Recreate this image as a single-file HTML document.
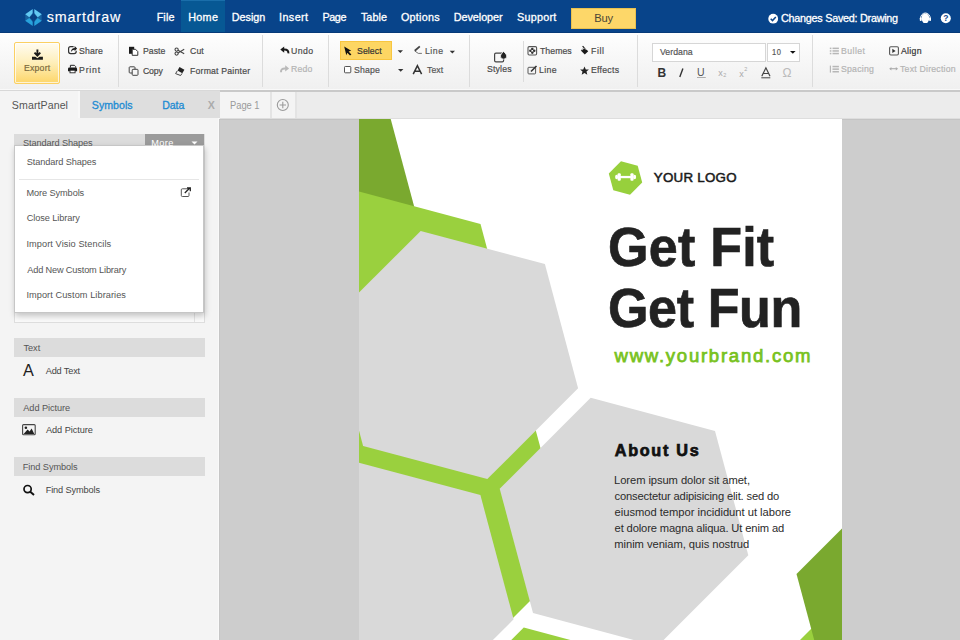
<!DOCTYPE html>
<html><head><meta charset="utf-8">
<style>
*{box-sizing:border-box}
html,body{margin:0;padding:0}
body{width:960px;height:640px;overflow:hidden;position:relative;background:#f4f4f4;font-family:"Liberation Sans",sans-serif}
.a{position:absolute}
.t{position:absolute;white-space:nowrap;line-height:1;font-family:"Liberation Sans",sans-serif}
#topbar{left:0;top:0;width:960px;height:33px;background:#08448a;border-bottom:1px solid #063a78}
#home{left:181px;top:0;width:44px;height:32px;background:#075894;border-top:1px solid #1a6eaa}
#buy{left:571px;top:8px;width:65px;height:21px;background:#fdd769;border:1px solid #e9c14f}
#toolbar{left:0;top:33px;width:960px;height:57px;background:linear-gradient(#fefefe,#f8f8f8 40%,#f0f0f0);border-bottom:1px solid #f9f9f9}
.sep{position:absolute;width:1px;background:#dcdcdc}
#export{left:14px;top:42px;width:46px;height:42px;border:1px solid #fbd062;border-radius:2px;background:linear-gradient(#fffcf2,#feeeb8 50%,#fdd66a);box-shadow:inset 0 0 0 1px rgba(255,255,255,0.7)}
#select{left:340px;top:41px;width:52px;height:19px;background:#fdd663;border:1px solid #f8c640}
.inp{position:absolute;background:#fff;border:1px solid #d6d6d6}
#ptabs{left:0;top:90px;width:220px;height:28px;background:#dedede;border-top:1px solid #d8d8d8}
#sptab{left:0;top:91px;width:80px;height:28px;background:#f4f4f4;border-right:2px solid #f8f8f8}
#pgbar{left:220px;top:90px;width:740px;height:29px;background:#ececec;border-top:2px solid #c9c9c9;border-bottom:1px solid #dedede}
#pg1{left:220px;top:92px;width:52px;height:26px;background:#f4f4f4;border-right:2px solid #e4e4e4}
#pgplus{left:272px;top:92px;width:25px;height:26px;background:#f4f4f4;border-right:2px solid #e4e4e4}
#canvas{left:219px;top:119px;width:741px;height:521px;background:#cdcdcd;border-top:1px solid #c4c4c4;border-left:1px solid #c6c6c6}
#panel{left:0;top:118px;width:219px;height:522px;background:#f4f4f4;border-right:1px solid #f9f9f9}
#page{left:359px;top:119px;width:483px;height:521px;background:#fff;overflow:hidden}
.hdr{position:absolute;left:14px;width:191px;height:19px;background:#dcdcdc}
#libbox{left:14px;top:134px;width:191px;height:189px;background:#fafafa;border:1px solid #dedede}
#sshdr{left:14px;top:134px;width:191px;height:20px;background:#dcdcdc}
#more{left:145px;top:134px;width:59px;height:20px;background:#9b9b9b}
#menu{left:14px;top:145px;width:190px;height:168px;background:#fff;border:1px solid #c6c6c6;box-shadow:1px 3px 6px rgba(0,0,0,0.22)}
svg{position:absolute;overflow:visible}
</style></head>
<body>
<div id="topbar" class="a"></div>
<div id="home" class="a"></div>
<div id="buy" class="a"></div>

<!-- logo -->
<svg class="a" style="left:0;top:0" width="60" height="33" viewBox="0 0 60 33">
  <polygon points="33.5,8.7 41.7,13.9 41.7,21.1 33.5,26.3 25.3,21.1 25.3,13.9" fill="#1863a0"/>
  <polygon points="25.3,14.3 32.8,8.9 32.8,13.1 29.3,17.2" fill="#63c9f3"/>
  <polygon points="41.7,14.3 34.2,8.9 34.2,13.1 37.7,17.2" fill="#63c9f3"/>
  <polygon points="25.3,20.8 29.4,17.9 32.8,21.9 32.8,26.1" fill="#27a2dc"/>
  <polygon points="41.7,20.8 37.6,17.9 34.2,21.9 34.2,26.1" fill="#27a2dc"/>
  <polygon points="33.5,13.3 37.3,17.55 33.5,21.8 29.7,17.55" fill="#0a3f80"/>
  <rect x="32.8" y="8" width="1.4" height="19" fill="#08448a"/>
</svg>

<!-- top right icons -->
<svg class="a" style="left:0;top:0" width="960" height="33" viewBox="0 0 960 33">
  <circle cx="773.2" cy="18.7" r="4.9" fill="#fff"/>
  <path d="M770.7 18.8 L772.5 20.6 L775.8 16.9" stroke="#0d478b" stroke-width="1.5" fill="none"/>
  <path d="M920.6 19.6 V18.2 A4.8 5.2 0 0 1 930.2 18.2 V19.6" fill="none" stroke="#fff" stroke-width="1"/>
  <path d="M925.4 13.6 C928.4 13.6 929.2 16.2 929.2 18.6 C929.2 21 927.8 22.2 927.2 23 H923.6 C923 22.2 921.6 21 921.6 18.6 C921.6 16.2 922.4 13.6 925.4 13.6 Z" fill="#fff"/>
  <rect x="919.8" y="17.4" width="1.9" height="3.6" rx="0.8" fill="#fff"/>
  <rect x="929.1" y="17.4" width="1.9" height="3.6" rx="0.8" fill="#fff"/>
  <circle cx="945.8" cy="18.3" r="5" fill="#fff"/>
  <text x="945.8" y="21.4" font-family="Liberation Sans" font-weight="700" font-size="8.5" fill="#0d478b" text-anchor="middle">?</text>
</svg>

<div id="toolbar" class="a"></div>
<div class="sep" style="left:118px;top:35px;height:52px"></div>
<div class="sep" style="left:262px;top:35px;height:52px"></div>
<div class="sep" style="left:328px;top:35px;height:52px"></div>
<div class="sep" style="left:469px;top:35px;height:52px"></div>
<div class="sep" style="left:523px;top:41px;height:41px"></div>
<div class="sep" style="left:637px;top:35px;height:52px"></div>
<div class="sep" style="left:812px;top:35px;height:52px"></div>
<div id="export" class="a"></div>
<div id="select" class="a"></div>
<div class="inp" style="left:652px;top:43px;width:114px;height:19px"></div>
<div class="inp" style="left:767px;top:43px;width:33px;height:19px"></div>

<!-- toolbar icons -->
<svg class="a" style="left:0;top:0" width="960" height="90" viewBox="0 0 960 90">
  <!-- export -->
  <path d="M37.4 49.6 V55.2 M34.5 52.6 L37.4 55.6 L40.3 52.6" stroke="#1a1a1a" stroke-width="1.9" fill="none"/>
  <path d="M32 56.8 H35.3 L37.4 58.3 L39.5 56.8 H42.9 V59.8 H32 Z" fill="#1a1a1a"/>
  <!-- share -->
  <path d="M73.6 46.6 H70.6 Q68.6 46.6 68.6 48.6 V51.6 Q68.6 53.6 70.6 53.6 H74.2 Q76.2 53.6 76.2 51.6 V50.8" stroke="#333" stroke-width="1.2" fill="none"/>
  <path d="M70.9 52 Q71.3 48.2 74.6 48 V46 L77.1 48.6 L74.6 51.2 V49.7 Q72.5 49.8 70.9 52 Z" fill="#222"/>
  <!-- print -->
  <path d="M70.4 67.6 V65.3 H74.4 L75.6 66.5 V67.6" fill="none" stroke="#222" stroke-width="1"/>
  <path d="M69.2 67.6 H75.8 Q77.1 67.6 77.1 68.9 V71.3 H68 V68.9 Q68 67.6 69.2 67.6 Z" fill="#1a1a1a"/>
  <rect x="70" y="70.2" width="5.1" height="2.6" fill="#fff" stroke="#222" stroke-width="0.9"/>
  <!-- paste -->
  <path d="M129 46.8 H134.2 V53.8 H129 Z" fill="#1a1a1a"/>
  <path d="M132.2 49.3 H135.6 L137.8 51.6 V55.3 H132.2 Z" fill="#fff" stroke="#333" stroke-width="1"/>
  <!-- cut -->
  <circle cx="176.6" cy="49.6" r="1.6" fill="none" stroke="#444" stroke-width="1.1"/>
  <circle cx="176.6" cy="53.6" r="1.6" fill="none" stroke="#444" stroke-width="1.1"/>
  <path d="M178 50.3 L184.2 53.8 M178 52.9 L184.2 49.3" stroke="#444" stroke-width="1.1"/>
  <!-- copy -->
  <rect x="129.2" y="66.8" width="5.8" height="6.2" rx="0.8" fill="none" stroke="#444" stroke-width="1"/>
  <rect x="132.2" y="69.3" width="5.8" height="6" rx="0.8" fill="#f6f6f6" stroke="#444" stroke-width="1"/>
  <!-- format painter -->
  <path d="M179.5 67 L184.4 69.8 L182.3 73.2 L177.6 70.4 Z" fill="#222"/>
  <path d="M177.3 70.8 L175.6 73.6 L180.6 75.5 L182 73.4" fill="none" stroke="#444" stroke-width="1"/>
  <!-- undo -->
  <path d="M288.4 53.4 Q288.6 49.6 284.6 49.6 H283" stroke="#1a1a1a" stroke-width="2" fill="none"/>
  <path d="M280.3 49.6 L284.2 46.4 V52.8 Z" fill="#1a1a1a"/>
  <!-- redo -->
  <path d="M281 72.2 Q280.8 68.4 284.8 68.4 H286.4" stroke="#b9b9b9" stroke-width="2" fill="none"/>
  <path d="M289.1 68.4 L285.2 65.2 V71.6 Z" fill="#b9b9b9"/>
  <!-- select cursor -->
  <path d="M344.2 46.4 L351.2 50.8 L348.6 51.6 L351.4 54.4 L350 55.6 L347.3 52.8 L346.3 55.3 Z" fill="#111"/>
  <path d="M397.6 50.3 H403 L400.3 53 Z" fill="#333"/>
  <path d="M398 69 H403.4 L400.7 71.7 Z" fill="#333"/>
  <path d="M449.7 50.8 H455 L452.35 53.5 Z" fill="#333"/>
  <!-- line icon -->
  <path d="M419.8 46.4 L414.8 50.8" stroke="#444" stroke-width="1.8" fill="none"/><path d="M414.6 50.9 L418.3 53.4 H421.9" stroke="#666" stroke-width="0.9" fill="none"/>
  <!-- shape checkbox -->
  <rect x="344.5" y="66.5" width="6.3" height="6.3" rx="0.8" fill="#fff" stroke="#555" stroke-width="1"/>
  <!-- A icon -->
  <path d="M413.2 74.2 L417.4 65.6 L421.6 74.2 M414.7 71.3 H420.1" stroke="#333" stroke-width="1.5" fill="none"/>
  <!-- styles -->
  <rect x="494.6" y="53.2" width="9" height="8.6" rx="1.3" fill="none" stroke="#444" stroke-width="1.2"/>
  <path d="M503.6 51.4 Q506.8 54.4 506.8 56 A3.2 3.2 0 0 1 500.4 56 Q500.4 54.4 503.6 51.4 Z" fill="#222" stroke="#f7f7f7" stroke-width="0.8"/>
  <!-- themes -->
  <rect x="528" y="46.6" width="8.6" height="8.4" rx="1.2" fill="none" stroke="#555" stroke-width="1.1"/>
  <circle cx="532.3" cy="49" r="1.3" fill="#333"/><circle cx="532.3" cy="52.6" r="1.3" fill="#333"/>
  <circle cx="530.4" cy="50.8" r="1.3" fill="#333"/><circle cx="534.2" cy="50.8" r="1.3" fill="#333"/>
  <circle cx="532.3" cy="50.8" r="0.8" fill="#fff"/>
  <!-- fill -->
  <path d="M580.8 50.6 L584.2 47.2 L588.2 51.2 L584.8 54.6 Z" fill="#1a1a1a"/>
  <path d="M582.6 46.2 L585.2 48.8" stroke="#1a1a1a" stroke-width="1.2"/>
  <path d="M581.8 50.3 L584.4 47.8 L586.6 50" stroke="#f6f6f6" stroke-width="0.8" fill="none"/>
  <!-- line edit -->
  <rect x="528" y="67.3" width="7.6" height="6.6" rx="0.8" fill="none" stroke="#555" stroke-width="1"/>
  <path d="M531 71.5 L536.5 66" stroke="#333" stroke-width="1.6"/>
  <!-- effects star -->
  <path d="M584.5 66.4 L585.8 69.4 L588.9 69.6 L586.5 71.6 L587.3 74.7 L584.5 73 L581.7 74.7 L582.5 71.6 L580.1 69.6 L583.2 69.4 Z" fill="#222"/>
  <!-- dropdown arrow size -->
  <path d="M790 51 H795.6 L792.8 53.8 Z" fill="#111"/>
  <!-- B I U etc -->
  <text x="657.6" y="77.2" font-family="Liberation Sans" font-weight="700" font-size="12" fill="#333">B</text>
  <path d="M682.9 68.6 L679.8 77" stroke="#333" stroke-width="1.4"/>
  <text x="697" y="76" font-family="Liberation Sans" font-size="10.5" fill="#555">U</text>
  <path d="M697 77.5 H705.8" stroke="#999" stroke-width="0.8"/>
  <text x="718.2" y="75.8" font-family="Liberation Sans" font-size="9" fill="#aaa">x</text>
  <text x="723.2" y="77.3" font-family="Liberation Sans" font-size="5.5" fill="#aaa">2</text>
  <text x="739.3" y="76.5" font-family="Liberation Sans" font-size="9" fill="#aaa">x</text>
  <text x="744.3" y="71" font-family="Liberation Sans" font-size="5.5" fill="#aaa">2</text>
  <path d="M761.8 76.3 L765.9 67.8 L770 76.3 M763.3 73.5 H768.5" stroke="#444" stroke-width="1.2" fill="none"/>
  <path d="M761.3 77.8 H770.3" stroke="#444" stroke-width="1"/>
  <text x="782.6" y="77.3" font-family="Liberation Sans" font-size="12" fill="#bbb">Ω</text>
  <!-- bullet -->
  <g fill="#b7b7b7">
   <rect x="829.8" y="47.6" width="1.6" height="1.5"/><rect x="832.5" y="47.6" width="6.4" height="1.5"/>
   <rect x="829.8" y="50.2" width="1.6" height="1.5"/><rect x="832.5" y="50.2" width="6.4" height="1.5"/>
   <rect x="829.8" y="52.8" width="1.6" height="1.5"/><rect x="832.5" y="52.8" width="6.4" height="1.5"/>
   <rect x="832.5" y="65.8" width="6.4" height="1.5"/><rect x="832.5" y="68.4" width="6.4" height="1.5"/><rect x="832.5" y="71" width="6.4" height="1.5"/>
   <rect x="829.8" y="65.6" width="1.2" height="7"/>
  </g>
  <!-- align -->
  <rect x="889.6" y="46.8" width="8.8" height="8.2" rx="1.2" fill="none" stroke="#555" stroke-width="1.1"/>
  <path d="M892.3 48.8 V53 L895.6 50.9 Z" fill="#333"/>
  <!-- text direction -->
  <path d="M890 68.7 H897.2" stroke="#aaa" stroke-width="1.1"/>
  <path d="M889.2 68.7 L891.4 66.9 V70.5 Z M898 68.7 L895.8 66.9 V70.5 Z" fill="#aaa"/>
</svg>

<div id="ptabs" class="a"></div>
<div id="sptab" class="a"></div>
<div id="pgbar" class="a"></div>
<div id="pg1" class="a"></div>
<div id="pgplus" class="a"></div>
<svg class="a" style="left:0;top:0" width="300" height="120" viewBox="0 0 300 120">
  <circle cx="282.8" cy="105" r="5.5" fill="none" stroke="#9a9a9a" stroke-width="1.1"/>
  <path d="M282.8 101.8 V108.2 M279.6 105 H286" stroke="#9a9a9a" stroke-width="1.1"/>
</svg>

<div id="canvas" class="a"></div>
<div id="panel" class="a"></div>

<div id="libbox" class="a"></div>
<div class="a" style="left:194px;top:300px;width:1px;height:22px;background:#e3e3e3"></div>
<div id="sshdr" class="a"></div>
<div id="more" class="a"></div>
<svg class="a" style="left:0;top:0" width="220" height="150" viewBox="0 0 220 150">
  <path d="M191.5 141.5 H197.5 L194.5 144.5 Z" fill="#fff"/>
</svg>
<div id="menu" class="a"></div>
<div class="a" style="left:19px;top:179px;width:180px;height:1px;background:#e6e6e6"></div>
<svg class="a" style="left:0;top:0" width="220" height="520" viewBox="0 0 220 520">
  <path d="M187.5 188.8 H182.3 A1 1 0 0 0 181.3 189.8 V195.5 A1 1 0 0 0 182.3 196.5 H188 A1 1 0 0 0 189 195.5 V192.5" fill="none" stroke="#555" stroke-width="1"/>
  <path d="M184.8 193 L189.5 188.3 M187 188 H190.3 V191.3" stroke="#222" stroke-width="1.3" fill="none"/>
  <!-- A -->
  <text x="22.9" y="375.8" font-family="Liberation Sans" font-size="16.2" fill="#1e1e1e">A</text>
  <!-- picture -->
  <rect x="22.6" y="424.6" width="12.6" height="10.2" rx="1" fill="none" stroke="#444" stroke-width="1.1"/>
  <path d="M23.6 433.9 L27.6 429.6 L29.6 431.4 L31.6 428.6 L34.3 433.9 Z" fill="#222"/>
  <circle cx="25.9" cy="427.7" r="1.3" fill="#222"/>
  <!-- search -->
  <circle cx="27.6" cy="489.1" r="3.6" fill="none" stroke="#111" stroke-width="1.7"/>
  <path d="M30.3 491.8 L34 495" stroke="#111" stroke-width="2"/>
</svg>
<div class="hdr" style="top:338px"></div>
<div class="hdr" style="top:398px"></div>
<div class="hdr" style="top:457px"></div>

<!-- page -->
<div id="page" class="a">
<svg style="left:0;top:0" width="483" height="521" viewBox="359 119 483 521">
  <polygon points="300,100 385.6,100 428.5,260 300,260" fill="#7aa92f"/>
  <polygon points="570.6,560.4 324.3,806.7 -12.1,716.6 -102.2,380.2 144.1,133.9 480.5,224.0" fill="#9ad03e"/>
  <polygon points="523.75,627.5 700,674.7 500,651.25" fill="#9ad03e"/>
  <polygon points="800,640 840,600 900,700 780,700" fill="#9ad03e"/>
  <polygon points="796.5,574 896.5,474 900,700 830.3,700" fill="#7aa92f"/>
  <polygon points="578.1,388.3 487.3,479.1 363.1,445.9 329.9,321.7 420.7,230.9 544.9,264.1" fill="#d9d9d9"/>
  <polygon points="748.3,555.3 657.3,646.3 533.0,613.0 499.7,488.7 590.7,397.7 715.0,431.0" fill="#d9d9d9"/>
  <polygon points="513.6,619.3 422.8,710.1 298.6,676.9 265.4,552.7 356.2,461.9 480.4,495.1" fill="#d9d9d9"/>
  <polygon points="642.2,182.5 630.0,194.7 613.3,190.2 608.8,173.5 621.0,161.3 637.7,165.8" fill="#97d03c"/>
  <g fill="#fff">
    <rect x="620" y="175.9" width="11.2" height="2.3"/>
    <rect x="617.6" y="173.2" width="3.2" height="7.6" rx="1.1"/>
    <rect x="630.4" y="173.2" width="3.2" height="7.6" rx="1.1"/>
    <ellipse cx="616.6" cy="177" rx="1.5" ry="2.3"/>
    <ellipse cx="634.6" cy="177" rx="1.5" ry="2.3"/>
  </g>
</svg>
</div>

<span id="t0" class="t" style="left:46.78px;top:9.60px;font-size:14.30px;font-weight:400;color:#ffffff;letter-spacing:0.850px;-webkit-text-stroke:0.15px #fff">smartdraw</span>
<span id="t1" class="t" style="left:156.65px;top:12.26px;font-size:10.80px;font-weight:400;color:#ffffff;letter-spacing:0.135px;-webkit-text-stroke:0.3px #fff">File</span>
<span id="t2" class="t" style="left:188.15px;top:12.26px;font-size:10.80px;font-weight:400;color:#ffffff;letter-spacing:0.333px;-webkit-text-stroke:0.3px #fff">Home</span>
<span id="t3" class="t" style="left:231.85px;top:12.26px;font-size:10.80px;font-weight:400;color:#ffffff;letter-spacing:-0.042px;-webkit-text-stroke:0.3px #fff">Design</span>
<span id="t4" class="t" style="left:279.05px;top:12.26px;font-size:10.80px;font-weight:400;color:#ffffff;letter-spacing:0.398px;-webkit-text-stroke:0.3px #fff">Insert</span>
<span id="t5" class="t" style="left:322.45px;top:12.26px;font-size:10.80px;font-weight:400;color:#ffffff;letter-spacing:-0.405px;-webkit-text-stroke:0.3px #fff">Page</span>
<span id="t6" class="t" style="left:360.90px;top:12.26px;font-size:10.80px;font-weight:400;color:#ffffff;letter-spacing:0.084px;-webkit-text-stroke:0.3px #fff">Table</span>
<span id="t7" class="t" style="left:400.90px;top:12.26px;font-size:10.80px;font-weight:400;color:#ffffff;letter-spacing:0.272px;-webkit-text-stroke:0.3px #fff">Options</span>
<span id="t8" class="t" style="left:453.75px;top:12.26px;font-size:10.80px;font-weight:400;color:#ffffff;letter-spacing:-0.041px;-webkit-text-stroke:0.3px #fff">Developer</span>
<span id="t9" class="t" style="left:517.05px;top:12.26px;font-size:10.80px;font-weight:400;color:#ffffff;letter-spacing:0.237px;-webkit-text-stroke:0.3px #fff">Support</span>
<span id="t10" class="t" style="left:594.30px;top:13.32px;font-size:11.20px;font-weight:400;color:#4b4636;letter-spacing:-0.300px">Buy</span>
<span id="t11" class="t" style="left:781.00px;top:13.46px;font-size:10.80px;font-weight:400;color:#ffffff;letter-spacing:-0.253px;-webkit-text-stroke:0.3px #fff">Changes Saved: Drawing</span>
<span id="t12" class="t" style="left:23.80px;top:63.14px;font-size:9.40px;font-weight:400;color:#7b6a3e;letter-spacing:0.213px;transform:scaleX(0.930);transform-origin:0 0;-webkit-text-stroke:0.2px currentColor">Export</span>
<span id="t13" class="t" style="left:79.03px;top:46.04px;font-size:9.40px;font-weight:400;color:#4a4a4a;letter-spacing:0.133px;transform:scaleX(0.930);transform-origin:0 0;-webkit-text-stroke:0.2px currentColor">Share</span>
<span id="t14" class="t" style="left:78.70px;top:64.64px;font-size:9.40px;font-weight:400;color:#4a4a4a;letter-spacing:0.882px;transform:scaleX(0.930);transform-origin:0 0;-webkit-text-stroke:0.2px currentColor">Print</span>
<span id="t15" class="t" style="left:142.90px;top:46.14px;font-size:9.40px;font-weight:400;color:#4a4a4a;letter-spacing:0.025px;transform:scaleX(0.930);transform-origin:0 0;-webkit-text-stroke:0.2px currentColor">Paste</span>
<span id="t16" class="t" style="left:189.58px;top:46.14px;font-size:9.40px;font-weight:400;color:#4a4a4a;letter-spacing:0.092px;transform:scaleX(0.930);transform-origin:0 0;-webkit-text-stroke:0.2px currentColor">Cut</span>
<span id="t17" class="t" style="left:143.18px;top:65.64px;font-size:9.40px;font-weight:400;color:#4a4a4a;letter-spacing:-0.211px;transform:scaleX(0.930);transform-origin:0 0;-webkit-text-stroke:0.2px currentColor">Copy</span>
<span id="t18" class="t" style="left:189.60px;top:65.64px;font-size:9.40px;font-weight:400;color:#4a4a4a;letter-spacing:0.199px;transform:scaleX(0.930);transform-origin:0 0;-webkit-text-stroke:0.2px currentColor">Format Painter</span>
<span id="t19" class="t" style="left:290.85px;top:45.64px;font-size:9.40px;font-weight:400;color:#4a4a4a;letter-spacing:0.467px;transform:scaleX(0.930);transform-origin:0 0;-webkit-text-stroke:0.2px currentColor">Undo</span>
<span id="t20" class="t" style="left:290.80px;top:64.24px;font-size:9.40px;font-weight:400;color:#b4b4b4;letter-spacing:0.197px;transform:scaleX(0.930);transform-origin:0 0;-webkit-text-stroke:0.2px currentColor">Redo</span>
<span id="t21" class="t" style="left:357.23px;top:45.84px;font-size:9.40px;font-weight:400;color:#333333;letter-spacing:0.093px;transform:scaleX(0.930);transform-origin:0 0;-webkit-text-stroke:0.2px currentColor">Select</span>
<span id="t22" class="t" style="left:425.30px;top:45.64px;font-size:9.40px;font-weight:400;color:#555555;letter-spacing:0.545px;transform:scaleX(0.930);transform-origin:0 0;-webkit-text-stroke:0.2px currentColor">Line</span>
<span id="t23" class="t" style="left:353.53px;top:65.34px;font-size:9.40px;font-weight:400;color:#555555;letter-spacing:0.147px;transform:scaleX(0.930);transform-origin:0 0;-webkit-text-stroke:0.2px currentColor">Shape</span>
<span id="t24" class="t" style="left:427.01px;top:64.74px;font-size:9.40px;font-weight:400;color:#555555;letter-spacing:0.040px;transform:scaleX(0.930);transform-origin:0 0;-webkit-text-stroke:0.2px currentColor">Text</span>
<span id="t25" class="t" style="left:486.63px;top:63.74px;font-size:9.40px;font-weight:400;color:#4a4a4a;letter-spacing:0.182px;transform:scaleX(0.930);transform-origin:0 0;-webkit-text-stroke:0.2px currentColor">Styles</span>
<span id="t26" class="t" style="left:539.81px;top:45.74px;font-size:9.40px;font-weight:400;color:#4a4a4a;letter-spacing:0.040px;transform:scaleX(0.930);transform-origin:0 0;-webkit-text-stroke:0.2px currentColor">Themes</span>
<span id="t27" class="t" style="left:591.30px;top:45.74px;font-size:9.40px;font-weight:400;color:#4a4a4a;letter-spacing:0.655px;transform:scaleX(0.930);transform-origin:0 0;-webkit-text-stroke:0.2px currentColor">Fill</span>
<span id="t28" class="t" style="left:539.30px;top:65.44px;font-size:9.40px;font-weight:400;color:#4a4a4a;letter-spacing:0.366px;transform:scaleX(0.930);transform-origin:0 0;-webkit-text-stroke:0.2px currentColor">Line</span>
<span id="t29" class="t" style="left:591.30px;top:65.44px;font-size:9.40px;font-weight:400;color:#4a4a4a;letter-spacing:0.271px;transform:scaleX(0.930);transform-origin:0 0;-webkit-text-stroke:0.2px currentColor">Effects</span>
<span id="t30" class="t" style="left:660.25px;top:47.24px;font-size:9.40px;font-weight:400;color:#555555;letter-spacing:0.029px;transform:scaleX(0.930);transform-origin:0 0;-webkit-text-stroke:0.2px currentColor">Verdana</span>
<span id="t31" class="t" style="left:771.64px;top:47.24px;font-size:9.40px;font-weight:400;color:#555555;letter-spacing:0.822px;transform:scaleX(0.800);transform-origin:0 0;-webkit-text-stroke:0.2px currentColor">10</span>
<span id="t32" class="t" style="left:841.00px;top:45.84px;font-size:9.40px;font-weight:400;color:#b4b4b4;letter-spacing:0.470px;transform:scaleX(0.930);transform-origin:0 0;-webkit-text-stroke:0.2px currentColor">Bullet</span>
<span id="t33" class="t" style="left:901.00px;top:46.14px;font-size:9.40px;font-weight:400;color:#333333;letter-spacing:0.295px;transform:scaleX(0.930);transform-origin:0 0;-webkit-text-stroke:0.2px currentColor">Align</span>
<span id="t34" class="t" style="left:840.88px;top:63.64px;font-size:9.40px;font-weight:400;color:#b4b4b4;letter-spacing:0.236px;transform:scaleX(0.930);transform-origin:0 0;-webkit-text-stroke:0.2px currentColor">Spacing</span>
<span id="t35" class="t" style="left:900.41px;top:63.64px;font-size:9.40px;font-weight:400;color:#b4b4b4;letter-spacing:0.229px;transform:scaleX(0.930);transform-origin:0 0;-webkit-text-stroke:0.2px currentColor">Text Direction</span>
<span id="t36" class="t" style="left:11.85px;top:100.23px;font-size:10.60px;font-weight:400;color:#555555;letter-spacing:0.086px">SmartPanel</span>
<span id="t37" class="t" style="left:91.85px;top:100.23px;font-size:10.60px;font-weight:400;color:#1d8bd3;letter-spacing:0.026px;-webkit-text-stroke:0.3px #1d8bd3">Symbols</span>
<span id="t38" class="t" style="left:162.15px;top:100.23px;font-size:10.60px;font-weight:400;color:#1d8bd3;letter-spacing:-0.082px;-webkit-text-stroke:0.3px #1d8bd3">Data</span>
<span id="t39" class="t" style="left:207.70px;top:100.43px;font-size:10.60px;font-weight:700;color:#ababab;letter-spacing:0.000px">X</span>
<span id="t40" class="t" style="left:230.03px;top:101.00px;font-size:10.40px;font-weight:400;color:#9a9a9a;letter-spacing:-0.015px;transform:scaleX(0.900);transform-origin:0 0">Page 1</span>
<span id="t41" class="t" style="left:23.10px;top:139.41px;font-size:9.20px;font-weight:400;color:#555555;letter-spacing:-0.114px">Standard Shapes</span>
<span id="t42" class="t" style="left:151.25px;top:139.41px;font-size:9.20px;font-weight:400;color:#ffffff;letter-spacing:0.385px">More</span>
<span id="t43" class="t" style="left:26.80px;top:157.71px;font-size:9.20px;font-weight:400;color:#555555;letter-spacing:-0.100px">Standard Shapes</span>
<span id="t44" class="t" style="left:26.45px;top:188.61px;font-size:9.20px;font-weight:400;color:#555555;letter-spacing:-0.086px">More Symbols</span>
<span id="t45" class="t" style="left:26.75px;top:214.31px;font-size:9.20px;font-weight:400;color:#555555;letter-spacing:-0.096px">Close Library</span>
<span id="t46" class="t" style="left:26.40px;top:239.91px;font-size:9.20px;font-weight:400;color:#555555;letter-spacing:0.086px">Import Visio Stencils</span>
<span id="t47" class="t" style="left:27.20px;top:265.51px;font-size:9.20px;font-weight:400;color:#555555;letter-spacing:-0.146px">Add New Custom Library</span>
<span id="t48" class="t" style="left:26.40px;top:291.11px;font-size:9.20px;font-weight:400;color:#555555;letter-spacing:0.070px">Import Custom Libraries</span>
<span id="t49" class="t" style="left:23.40px;top:344.31px;font-size:9.20px;font-weight:400;color:#555555;letter-spacing:-0.006px">Text</span>
<span id="t50" class="t" style="left:45.70px;top:366.81px;font-size:9.20px;font-weight:400;color:#444444;letter-spacing:-0.163px">Add Text</span>
<span id="t51" class="t" style="left:23.30px;top:403.71px;font-size:9.20px;font-weight:400;color:#555555;letter-spacing:-0.069px">Add Picture</span>
<span id="t52" class="t" style="left:46.00px;top:426.41px;font-size:9.20px;font-weight:400;color:#444444;letter-spacing:-0.059px">Add Picture</span>
<span id="t53" class="t" style="left:22.75px;top:463.31px;font-size:9.20px;font-weight:400;color:#555555;letter-spacing:-0.071px">Find Symbols</span>
<span id="t54" class="t" style="left:45.65px;top:485.71px;font-size:9.20px;font-weight:400;color:#444444;letter-spacing:-0.107px">Find Symbols</span>
<span id="t55" class="t" style="left:653.79px;top:170.74px;font-size:13.30px;font-weight:400;color:#1a1a1a;letter-spacing:0.279px;-webkit-text-stroke:0.55px #1a1a1a">YOUR LOGO</span>
<span id="t56" class="t" style="left:607.57px;top:219.20px;font-size:56.00px;font-weight:700;color:#222222;letter-spacing:0.228px;transform:scaleX(0.930);transform-origin:0 0;-webkit-text-stroke:0.7px #222">Get Fit</span>
<span id="t57" class="t" style="left:607.57px;top:279.90px;font-size:56.00px;font-weight:700;color:#222222;letter-spacing:-0.426px;transform:scaleX(0.930);transform-origin:0 0;-webkit-text-stroke:0.7px #222">Get Fun</span>
<span id="t58" class="t" style="left:614.49px;top:347.06px;font-size:18.60px;font-weight:400;color:#78c21e;letter-spacing:1.723px;-webkit-text-stroke:0.75px #78c21e">www.yourbrand.com</span>
<span id="t59" class="t" style="left:614.75px;top:442.29px;font-size:16.20px;font-weight:700;color:#111111;letter-spacing:1.717px;-webkit-text-stroke:0.75px #111">About Us</span>
<span id="t60" class="t" style="left:614.10px;top:475.12px;font-size:11.20px;font-weight:400;color:#2b2b2b;letter-spacing:-0.082px">Lorem ipsum dolor sit amet,</span>
<span id="t61" class="t" style="left:614.55px;top:490.92px;font-size:11.20px;font-weight:400;color:#2b2b2b;letter-spacing:-0.163px">consectetur adipisicing elit. sed do</span>
<span id="t62" class="t" style="left:614.55px;top:507.02px;font-size:11.20px;font-weight:400;color:#2b2b2b;letter-spacing:-0.021px">eiusmod tempor incididunt ut labore</span>
<span id="t63" class="t" style="left:614.55px;top:522.52px;font-size:11.20px;font-weight:400;color:#2b2b2b;letter-spacing:-0.135px">et dolore magna aliqua. Ut enim ad</span>
<span id="t64" class="t" style="left:614.30px;top:538.52px;font-size:11.20px;font-weight:400;color:#2b2b2b;letter-spacing:-0.048px">minim veniam, quis nostrud</span>
</body></html>
